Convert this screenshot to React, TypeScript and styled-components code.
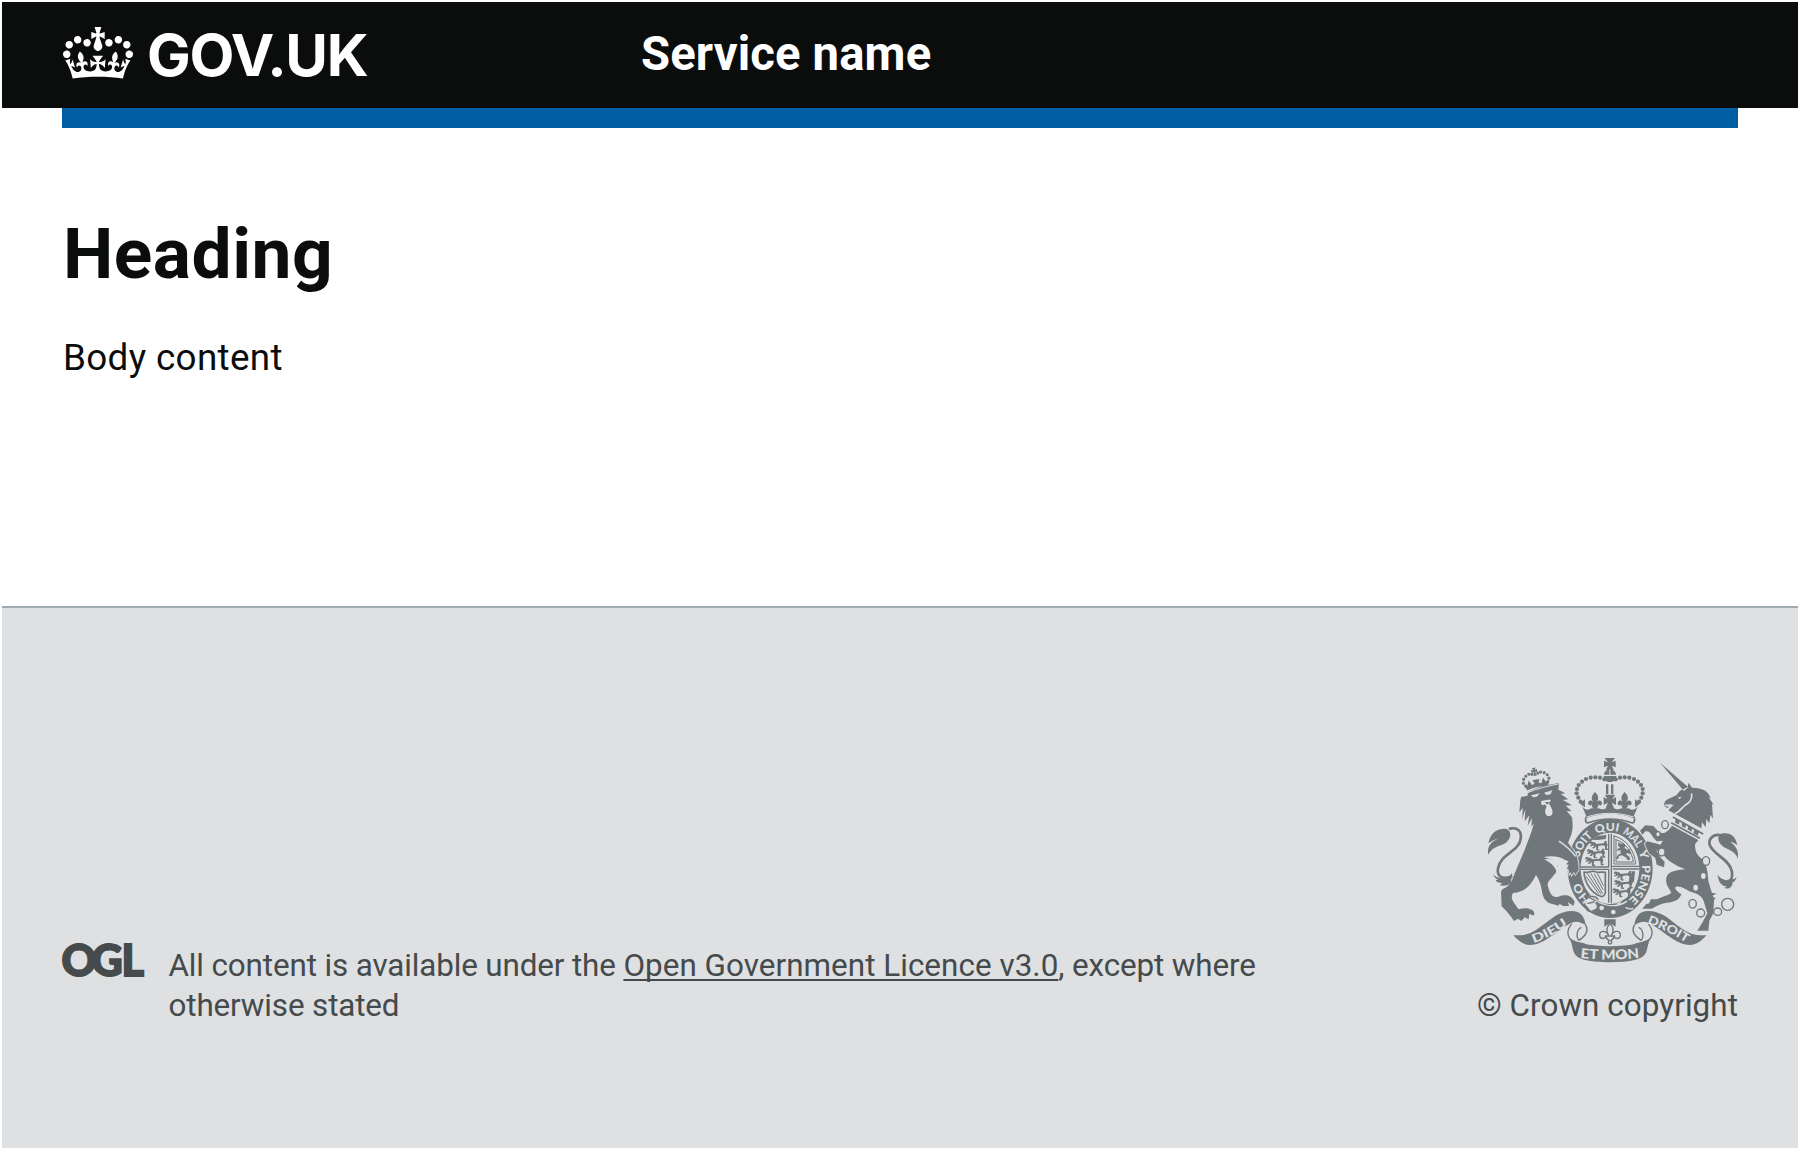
import React from 'react';
import styled, { createGlobalStyle } from 'styled-components';

const colors = {
  black: '#0b0c0c',
  blue: '#005ea5',
  footer: '#dee0e2',
  footerBorder: '#a1acb2',
  footerText: '#454a4c',
  crest: '#6f777b',
};

const GlobalStyle = createGlobalStyle`
  *, *::before, *::after { box-sizing: border-box; }
  body { margin: 0; background: #fff; font-family: Roboto, Arial, sans-serif; }
`;

const Page = styled.div`
  display: flex;
  flex-direction: column;
  height: 1152px;
  padding: 2px 0 4px 2px;
  overflow: hidden;
`;

const Header = styled.header`
  flex: none;
  height: 106px;
  padding: 0 60px;
  background: ${colors.black};
  color: #fff;
`;

const HeaderInner = styled.div`
  display: grid;
  grid-template-columns: 579px 1fr;
  height: 106px;
`;

const Logo = styled.a`
  display: flex;
  align-items: flex-start;
  color: inherit;
  text-decoration: none;
`;

const CrownIcon = styled.svg`
  flex: none;
  width: 70px;
  height: 52px;
  margin: 24.5px 14px 0 1px;
  fill: currentColor;
`;

const Logotype = styled.span`
  padding-top: 18px;
  font: 700 58.3px/70px Inter, Arial, sans-serif;
  letter-spacing: -1.35px;
`;

const ServiceName = styled.a`
  padding-top: 24px;
  color: inherit;
  font-size: 47.2px;
  font-weight: 700;
  line-height: 56px;
  letter-spacing: 0.15px;
  text-decoration: none;
`;

const Container = styled.div`
  flex: none;
  height: 498px;
  padding: 0 60px;
`;

const BlueBar = styled.div`
  height: 20px;
  background: ${colors.blue};
`;

const Main = styled.main`
  padding: 84px 1px 0;
  color: ${colors.black};
`;

const Heading = styled.h1`
  margin: 0 0 38px;
  font-size: 71.3px;
  font-weight: 700;
  line-height: 83px;
  letter-spacing: 0.5px;
`;

const Body = styled.p`
  margin: 0;
  font-size: 36.8px;
  line-height: 50px;
  letter-spacing: 0.35px;
`;

const Footer = styled.footer`
  display: flex;
  flex: 1;
  align-items: flex-end;
  justify-content: space-between;
  padding: 0 60px 122px;
  border-top: 2px solid ${colors.footerBorder};
  background: ${colors.footer};
  color: ${colors.footerText};
  font-size: 31.4px;
  line-height: 40px;
`;

const Licence = styled.div`
  display: flex;
  align-items: flex-start;
  width: 1220px;
`;

const OglLogo = styled.svg`
  flex: none;
  width: 83px;
  height: 36px;
  margin: -3px 23.5px 0 0;
  overflow: visible;
  fill: currentColor;
  stroke: currentColor;
  font: 900 43px Lato, sans-serif;
`;

const LicenceText = styled.span`
  letter-spacing: -0.13px;
`;

const FooterLink = styled.a`
  color: inherit;
  letter-spacing: 0.04px;
  text-decoration: underline;
  text-decoration-thickness: 2px;
  text-decoration-skip-ink: none;
  text-underline-offset: 3px;
`;

const Copyright = styled.a`
  display: flex;
  flex-direction: column;
  align-items: flex-end;
  gap: 23px;
  color: inherit;
  text-decoration: none;
  white-space: nowrap;
  letter-spacing: 0.06px;
`;

const CrestSvg = styled.svg`
  width: 250px;
  height: 205px;
  fill: ${colors.crest};
`;

const Motto = styled.text<{ $size?: number }>`
  fill: ${colors.footer};
  font: 900 ${p => p.$size ?? 34}px Lato, sans-serif;
  letter-spacing: 0;
`;

const Line = styled.path<{ $w?: number; $light?: boolean }>`
  fill: none;
  stroke: ${p => (p.$light ? colors.footer : colors.crest)};
  stroke-width: ${p => p.$w ?? 4};
  stroke-linecap: round;
  stroke-linejoin: round;
`;

/* A filled figure with a thin gap around it where it crosses the garter. */
const Figure = styled.path`
  stroke: ${colors.footer};
  stroke-width: 5;
  paint-order: stroke;
`;

const Light = styled.path`
  fill: ${colors.footer};
`;

const ChainRing = styled.ellipse<{ $light?: boolean }>`
  fill: ${colors.footer};
  stroke: ${p => (p.$light ? 'none' : colors.crest)};
  stroke-width: 4;
`;

const Crown = () => (
  <CrownIcon viewBox="0 0 132 97" preserveAspectRatio="none" aria-hidden="true">
    <path d="M25 30.2c3.5 1.5 7.7-.2 9.1-3.7 1.5-3.6-.2-7.8-3.9-9.2-3.6-1.4-7.6.3-9.1 3.9-1.4 3.5.3 7.5 3.9 9zM9 39.5c3.6 1.5 7.8-.2 9.2-3.7 1.5-3.6-.2-7.8-3.9-9.1-3.6-1.5-7.6.2-9.1 3.8-1.4 3.5.3 7.5 3.8 9zM4.4 57.2c3.5 1.5 7.7-.2 9.1-3.8 1.5-3.6-.2-7.7-3.9-9.1-3.5-1.5-7.6.3-9.1 3.8-1.4 3.5.3 7.6 3.9 9.1zm38.3-21.4c3.5 1.5 7.7-.2 9.1-3.8 1.5-3.6-.2-7.7-3.9-9.1-3.6-1.5-7.6.3-9.1 3.8-1.3 3.6.4 7.7 3.9 9.1zm64.4-5.6c-3.6 1.5-7.8-.2-9.1-3.7-1.5-3.6.2-7.8 3.8-9.2 3.6-1.4 7.7.3 9.2 3.9 1.3 3.5-.4 7.5-3.9 9zm15.9 9.3c-3.6 1.5-7.7-.2-9.1-3.7-1.5-3.6.2-7.8 3.7-9.1 3.6-1.5 7.7.2 9.2 3.8 1.5 3.5-.3 7.5-3.8 9zm4.7 17.7c-3.6 1.5-7.8-.2-9.2-3.8-1.5-3.6.2-7.7 3.9-9.1 3.6-1.5 7.7.3 9.2 3.8 1.3 3.5-.4 7.6-3.9 9.1zM89.3 35.8c-3.6 1.5-7.8-.2-9.2-3.8-1.4-3.6.2-7.7 3.9-9.1 3.6-1.5 7.7.3 9.2 3.8 1.4 3.6-.3 7.7-3.9 9.1zM69.7 17.7l8.9 4.7V9.3l-8.9 2.8c-.2-.3-.5-.6-.9-.9L72.4 0H59.6l3.5 11.2c-.3.3-.6.5-.9.9l-8.8-2.8v13.1l8.8-4.7c.3.3.6.7.9.9l-5 15.4v.1c-.2.8-.4 1.6-.4 2.4 0 4.1 3.1 7.5 7 8.1h.2c.3 0 .7.1 1 .1.4 0 .7 0 1-.1h.2c4-.6 7.1-4.1 7.1-8.1 0-.8-.1-1.7-.4-2.4V34l-5.1-15.4c.4-.2.7-.6 1-.9zM66 92.8c16.9 0 32.8 1.1 47.1 3.2 4-16.9 8.9-26.7 14-33.5l-9.6-3.4c1 4.9 1.1 7.2 0 10.2-1.5-1.4-3-4.3-4.2-8.7L108.6 76c2.8-2 5-3.2 7.5-3.3-4.4 9.4-10 11.9-13.6 11.2-4.3-.8-6.3-4.6-5.6-7.9 1-4.7 5.7-5.9 8-.5 4.3-8.7-3-11.4-7.6-8.8 7.1-7.2 7.9-13.5 2.1-21.1-8 6.1-8.1 12.3-4.5 20.8-4.7-5.4-12.1-2.5-9.5 6.2 3.4-5.2 7.9-2 7.2 3.1-.6 4.3-6.4 7.8-13.5 7.2-10.3-.9-10.9-8-11.2-13.8 2.5-.5 7.1 1.8 11 7.3L80.2 60c-4.1 4.4-8 5.3-12.3 5.4 1.4-4.4 8-11.6 8-11.6H55.5s6.4 7.2 7.9 11.6c-4.2-.1-8-1-12.3-5.4l1.4 16.4c3.9-5.5 8.5-7.7 10.9-7.3-.3 5.8-.9 12.8-11.1 13.8-7.2.6-12.9-2.9-13.5-7.2-.7-5 3.8-8.3 7.1-3.1 2.7-8.7-4.6-11.6-9.4-6.2 3.7-8.5 3.6-14.7-4.6-20.8-5.8 7.6-5 13.9 2.2 21.1-4.7-2.6-11.9.1-7.7 8.8 2.3-5.5 7.1-4.2 8.1.5.7 3.3-1.3 7.1-5.7 7.9-3.5.7-9-1.8-13.5-11.2 2.5.1 4.7 1.3 7.5 3.3l-4.7-15.4c-1.2 4.4-2.7 7.2-4.3 8.7-1.1-3-.9-5.3 0-10.2l-9.5 3.4c5 6.9 9.9 16.7 14 33.5 14.8-2.1 30.8-3.2 47.7-3.2z" />
  </CrownIcon>
);

/* Words of the garter motto, each on its own stretch of the ellipse.
   Angles run clockwise, in degrees, from the ellipse's left end. */
const garterWords: [string, number, number][] = [
  ['HO', -53, -20],
  ['SOIT', 17, 59],
  ['QUI', 65, 106],
  ['MAL', 112, 148],
  ['Y', 153, 167],
  ['PENSE', 175, 236],
];

const garterPoint = (deg: number) => {
  const a = ((deg - 180) * Math.PI) / 180;
  return [450 + 96 * Math.cos(a), 386 + 114 * Math.sin(a)];
};

const garterArc = (from: number, to: number) => {
  const points: string[] = [];
  for (let i = 0; i <= 20; i++) {
    const [x, y] = garterPoint(from + ((to - from) * i) / 20);
    points.push(`${x.toFixed(1)} ${y.toFixed(1)}`);
  }
  return 'M' + points.join('L');
};

const garterLength = (from: number, to: number) => {
  const [x0, y0] = garterPoint(from);
  const [xm, ym] = garterPoint((from + to) / 2);
  const [x1, y1] = garterPoint(to);
  return Math.hypot(xm - x0, ym - y0) + Math.hypot(x1 - xm, y1 - ym);
};

const Garter = () => (
  <g>
    <path fillRule="evenodd" d="M450 237c71 0 128 66 128 148s-57 149-128 149-127-67-127-149 56-148 127-148zM450 278c-49 0-88 48-88 107s39 107 88 107 88-48 88-107-39-107-88-107z" />
    {garterWords.map(([word, from, to]) => (
      <g key={word}>
        <path id={`garter-${word}`} d={garterArc(from, to)} fill="none" />
        <Motto>
          <textPath href={`#garter-${word}`} textLength={garterLength(from, to) - 1} lengthAdjust="spacingAndGlyphs">
            {word}
          </textPath>
        </Motto>
      </g>
    ))}
    <Light d="M375 492l14-26 24 16-8 8c8 6 7 17-2 18l-8 8zM418 504a7 7 0 1 0 14 0 7 7 0 1 0-14 0M453 516a7 7 0 1 0 14 0 7 7 0 1 0-14 0M468 492l18-8-8 12z" />
    <Line d="M378 478c10-12 28-12 36 0M380 504c-2 10 12 12 20 8M390 474l16 8M384 490l18-4" />
    <Line $light d="M414 486c30 14 60 16 86-2M498 503c8 4 14 6 20 2" />
  </g>
);

const PassantLion = ({ x, y }: { x: number; y: number }) => (
  <path
    transform={`translate(${x} ${y})`}
    d="M0 3l6-3 4 3 6 0 4 5 22-2 4-7 7 0-3 4 4 6-3 12 5 2-2 3-8 0 0-11-6-3-14 2-1 9 5 2-2 3-8-1-1-12-5 6-6 0 1-4 4-1-1-4-6 3-5 0 0-3 5-2-1-3-5 2z"
  />
);

const Shield = () => (
  <g>
    <PassantLion x={389} y={304} />
    <PassantLion x={381} y={327} />
    <PassantLion x={376} y={350} />
    <Line d="M446 283v98h-84M454 283v205M446 388v98M364 388h82M454 379h83M460 387h76" />
    <path d="M395 299l18-11 26-3-2 12-24 3z" />
    <Line $w={3} d="M462 288v84h65c-3-42-30-76-65-84zM468 299v67h52c-4-32-24-58-52-67z" />
    <path d="M474 306l7 5 10-1 6 8-4 5 9 7 11-4-4 8 5 3-3 6-9-4-4 4 11 8 1 9-8 0-3-7-13-7-9 2-2 8-7 2 2-8 6-7 6-2-1-11-9 3 0-6 8-4-5-5z" />
    <Line $w={5} d="M372 396c12 5 22-6 34-1s18-1 30 2v62c-5 13-12 12-18 8-24-10-44-38-46-71z" />
    <Line $w={3} d="M383 402l40 60M393 401l34 58M403 402l26 46M413 402l17 34M379 410l36 50" />
    <PassantLion x={462} y={394} />
    <PassantLion x={463} y={419} />
    <PassantLion x={458} y={444} />
    <path d="M515 394h10l-3 30-10 12-6-8 6-6-4-7 6-6zM508 441h8l-10 18z" />
  </g>
);

const ring = (points: number[][], r: number) =>
  points.map(([cx, cy]) => <circle key={`${cx}-${cy}`} cx={cx} cy={cy} r={r} />);

const FleurDeLis = ({ x, y }: { x: number; y: number }) => (
  <path
    transform={`translate(${x} ${y})`}
    d="M0-25c12 12 12 21 4 31 7-9 17-6 17 3 0 7-8 9-11 3 0 8-3 11-7 13h-6c-4-2-7-5-7-13-3 6-11 4-11-3 0-9 10-12 17-3-8-10-8-19 4-31z"
  />
);

const RoyalCrown = () => (
  <g>
    <path d="M434 54h31l-10 13 12-5v20l-12-5 6 12h-23l6-12-12 5V62l12 5zM432 105c0-22 36-22 36 0zM431 108h38c0 24-38 24-38 0z" />
    <Light d="M448 88h3v17h-3zM431 104h38v3h-38z" />
    {ring([[433, 118], [420, 113], [406, 112], [392, 113], [378, 117], [366, 125], [356, 135], [351, 147], [350, 160], [355, 173], [362, 185], [467, 118], [480, 113], [494, 112], [508, 113], [522, 117], [534, 125], [543, 135], [548, 147], [548, 160], [544, 173], [537, 185]], 6.3)}
    <path d="M438 133h7v29h-7zM453 133h7v29h-7zM435 164h30l-8 14 11-7v24l-13-7 7 15h-25l7-15-13 7v-24l11 7zM360 191l15-13v24zM540 191l-15-13v24z" />
    <FleurDeLis x={405} y={181} />
    <FleurDeLis x={494} y={181} />
    <path d="M364 193c6 16 18 21 30 12h22c10 6 22 3 28-7h12c6 10 18 13 28 7h22c12 9 24 4 30-12l-17 41c-45-16-93-16-138 0z" />
    <Line $w={5} d="M386 224c-12 6-12 22-3 25 42-15 92-15 134 0 10-3 9-19-3-25" />
    <Line $light $w={3} d="M380 231c44-15 96-15 140 0" />
    <Light d="M389 231c40-12 84-12 122 0 6 3 7 9 2 12-40-14-86-14-126 0-4-3-4-10 2-12z" />
  </g>
);

const Lion = () => (
  <g>
    <Figure d="M184 170l18-2 2-11c28-16 57-23 93-28l-2 20 21 11-14 2 23 16-16 2 27 16-19 1 18 17-15-1 16 19c3 25 4 42-8 66l-4 10 18 24c10 14 14 38 14 58l-10 14-4-9-7 11-3-10-4 6-3-16-5 2 6-14-8-1 8-9-11-4c-12-10-37-14-64-9 21 7 50 9 41 34-3 23-31 35-29 51 5 20 12 40 32 34 20-7 38-6 49 15l-4 13-16-12 3 12-17 0-11-6-4 5-15-4c-25-6-31-19-35-44-3-18-8-31-17-44-18 36-36 51-69 54-11 18 5 31 17 49 20-6 43-3 47 11l-2 8-13-6-2 17-12-6-10 11-10-7-12 7-11-16-14-16-12-12-2-44 5-8c20-7 27-22 34-42l32-75c11-30 20-50 28-80l-8 10 2-26-13 23 5-31-14 18 2-37-9 29 1-32-10 13 3-37z" />
    <g transform="translate(228 120) rotate(-11)">
      {ring([[-34, 12], [-39, 2], [-36, -9], [-28, -17], [-18, -21], [-9, -19], [34, 12], [39, 2], [36, -9], [28, -17], [18, -21], [9, -19]], 4.6)}
      <path d="M-6-37h12l-4 7 7-2v9l-7-2 3 12h-10l3-12-7 2v-9l7 2zM-38 6l10 5 6-14 8 16 8-4-5-10h22l-5 10 8 4 8-16 6 14 10-5-6 20c-21-6-43-6-64 0z" />
    </g>
    <Line $light $w={3} d="M203 158c28-12 60-20 92-26" />
    <Light d="M213 166l27-6-10 10-10 2zM252 158l25-7-5 12-13 2zM243 183l21-4 8 0c0 5-3 8-6 9l8 15c6 12 5 23-5 25s-15-7-13-19l4-10-7-6c-3 4-6 4-9 0z" />
    <Light d="M253 358c19-2 34 0 46 9l-7 11c7 12 5 25-1 38 3-29-13-45-38-58z" />
    <path d="M254 186l14 0-6 8z" />
    <Line $light d="M298 304c18 12 34 25 48 44" />
    <Line $w={8} d="M150 266c22-5 36 7 32 31-5 38-60 44-68 88-4 23 10 34 40 25" />
    <path d="M84 344c-2-25 7-37 29-48-11 2-17 7-28 14 5-26 20-44 51-44 23 4 18 36-5 46-15 8-31 7-47 32zM99 403c8 8 15 11 28 12 15-1 24-8 30-17l-5 31c-11 11-24 8-35 7 6-2 8-5 8-8-10 2-17-3-18-8l8-1c-8-2-13-8-16-16z" />
  </g>
);

const Unicorn = () => (
  <g>
    <path d="M600 68l72 85 13-11zM613 200c-2-8 0-14 6-20l31-15 10-13 22-10 4-14 10 15c32 0 48 10 56 31l-6-2 15 22-5-2 3 44-8-12-3 26-9-13-2 25-11-15-2 18-77-42-22-12 18-18-12 4-9 7-7-4 6-6-5-2z" />
    <Light d="M619 194l17-2c-5 10-9 9-17 7zM652 173l12-3-4 7z" />
    <Line $light $w={5} d="M695 162c2 20-8 27-20 34-9 6-14 18-28 24" />
    <Light d="M641 225l90 50-10 30-87-50z" />
    <Line $w={5} d="M640 232l88 49M635 249l83 45" />
    <path d="M647 236l12 8-2 10-12-6zM666 247l12 7-2 10-11-5zM685 257l12 7-3 11-11-7zM704 267l13 8-4 12-13-7z" />
    <Figure d="M636 257L715 300L705 313C705 335 711 345 723 355C742 370 742 397 746 427L762 480L760 520L748 542L745 572L712 572L728 546L742 520L733 490C729 470 715 463 697 457C676 450 665 437 648 440C641 443 651 455 664 462C660 480 640 487 620 488C600 492 590 497 575 506L547 506L558 493L568 490L572 478L590 478C605 470 620 468 634 459C632 448 615 437 619 413C625 393 650 390 676 388C645 377 622 362 612 346L604 340L588 330L600 350L614 366L612 382L590 374L586 354L566 338L554 312L562 304L602 314L608 302L590 304L578 290C572 278 566 272 556 274L547 284L540 272L556 256L580 258L596 275C605 283 622 280 636 257Z" />
    <path d="M742 433l6 24 22 4-14 6 12 10-16 2z" />
    <Line $w={8} d="M780 285c-22-3-35 13-31 29 8 29 59 43 66 78 5 22-4 38-22 40" />
    <path d="M834 356c2-25-5-37-24-51 9 2 15 5 22 10-5-25-19-38-44-35-21 6-15 30 4 42 18 9 34 14 42 34zM830 411c-7 7-13 8-20 6l-11 4c-10-2-20-8-27-16l6 20c7 11 15 14 24 15l-9 3c12 7 21-1 25-11l-3-3c7-2 12-8 15-18z" />
    {[[615, 254, 10, 12], [594, 283, 7, 8], [605, 336, 10, 12], [738, 363, 11, 13], [698, 491, 11, 13], [722, 519, 12, 12], [773, 515, 12, 11], [803, 493, 18, 18]].map(([cx, cy, rx, ry]) => (
      <ChainRing key={cx} cx={cx} cy={cy} rx={rx} ry={ry} />
    ))}
    <ChainRing $light cx={730} cy={408} rx={7} ry={9} />
    <ChainRing $light cx={707} cy={443} rx={7} ry={9} />
  </g>
);

const RibbonEnd = () => (
  <g>
    <path d="M160 586h22c62-4 90-73 153-73 28 0 39 18 42 43-16-11-29-14-43-7-47 23-77 64-124 66-20 0-36-14-50-29z" />
    <Line d="M334 553c-12 14-14 28-5 42 8 10 26 14 43 17M377 555c11 20-3 35-20 46-10-10-6-33 6-38" />
  </g>
);

const Ribbon = () => (
  <g>
    <RibbonEnd />
    <g transform="translate(900 0) scale(-1 1)">
      <RibbonEnd />
    </g>
    <path d="M326 592c14 14 60 27 124 27s109-13 124-27c-12 17-10 35-17 48-8 18-46 27-107 27s-100-9-107-27c-7-13-5-31-17-48z" />
    <path id="ribbon-dieu" d="M221 609q56-19 108-60" fill="none" />
    <path id="ribbon-mon" d="M361 654q88 10 180-1" fill="none" />
    <path id="ribbon-droit" d="M561 549q61 22 120 61" fill="none" />
    <Motto $size={36}>
      <textPath href="#ribbon-dieu" textLength="117" lengthAdjust="spacingAndGlyphs">DIEU</textPath>
    </Motto>
    <Motto $size={41}>
      <textPath href="#ribbon-mon" textLength="178" lengthAdjust="spacingAndGlyphs">ET MON</textPath>
    </Motto>
    <Motto $size={36}>
      <textPath href="#ribbon-droit" textLength="132" lengthAdjust="spacingAndGlyphs">DROIT</textPath>
    </Motto>
    <path d="M433 538h34v22l-17-10-17 10z" />
    <Line d="M450 551c-14 13-10 24-5 33-9-15-27-12-26 3 1 10 15 12 19 2 1 8 4 10 8 11M450 551c14 13 10 24 5 33 9-15 27-12 26 3-1 10-15 12-19 2-1 8-4 10-8 11M436 588h28" />
    <circle cx="450" cy="607" r="7" />
    <Light d="M447 607a3 3 0 1 0 6 0 3 3 0 1 0-6 0" />
  </g>
);

const RoyalCoatOfArms = () => (
  <CrestSvg viewBox="84 54 750 615" aria-hidden="true">
    <Garter />
    <Shield />
    <RoyalCrown />
    <Lion />
    <Unicorn />
    <Ribbon />
  </CrestSvg>
);

export default function App() {
  return (
    <>
      <GlobalStyle />
      <Page>
        <Header>
          <HeaderInner>
            <Logo>
              <Crown />
              <Logotype>GOV.UK</Logotype>
            </Logo>
            <ServiceName>Service name</ServiceName>
          </HeaderInner>
        </Header>
        <Container>
          <BlueBar />
          <Main>
            <Heading>Heading</Heading>
            <Body>Body content</Body>
          </Main>
        </Container>
        <Footer>
          <Licence>
            <OglLogo viewBox="0 0 83 36">
              <text x="-.5" y="33" strokeWidth="1.8">O</text>
              <text x="29.5" y="33" strokeWidth="1.8">G</text>
              <text x="59.5" y="33" strokeWidth="1.8">L</text>
            </OglLogo>
            <LicenceText>
              All content is available under the <FooterLink>Open Government Licence v3.0</FooterLink>, except where otherwise stated
            </LicenceText>
          </Licence>
          <Copyright>
            <RoyalCoatOfArms />
            <span>© Crown copyright</span>
          </Copyright>
        </Footer>
      </Page>
    </>
  );
}
